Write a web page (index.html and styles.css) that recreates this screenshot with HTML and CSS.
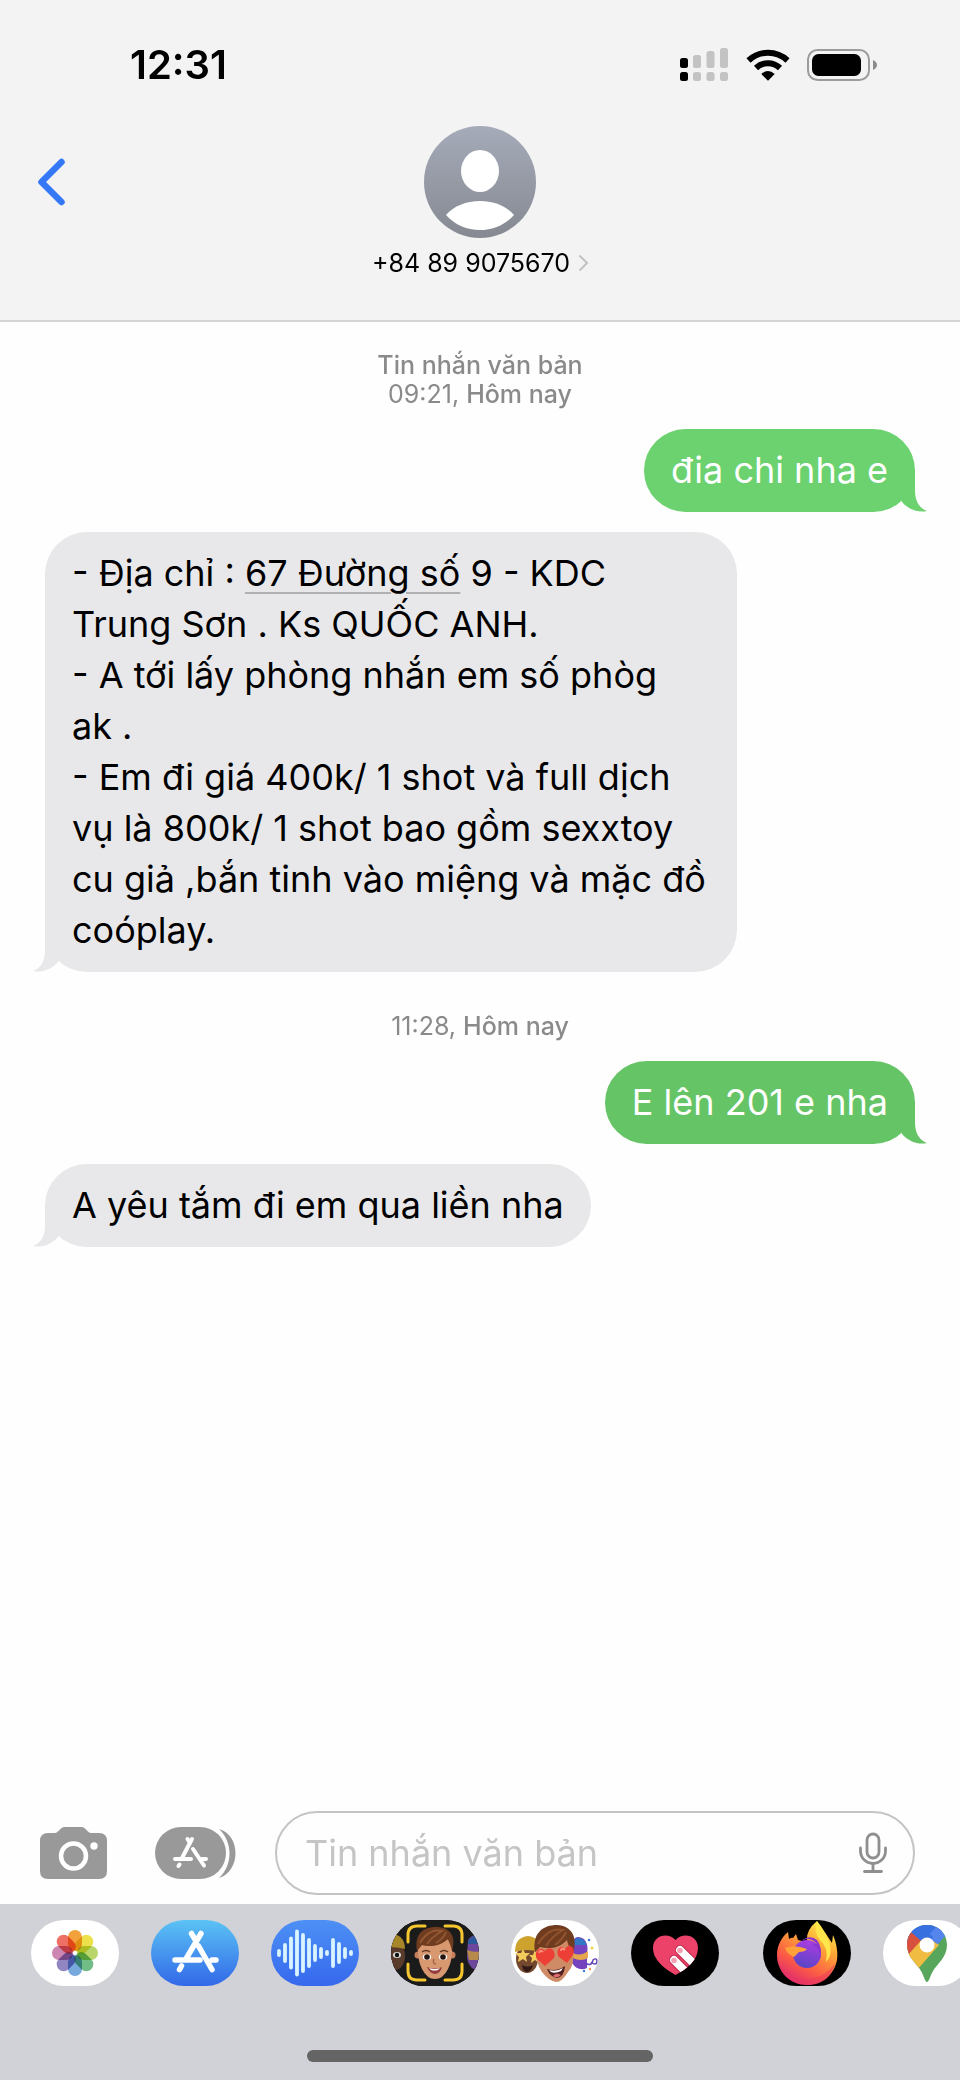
FILE: index.html
```html
<!DOCTYPE html>
<html lang="vi">
<head>
    <meta charset="UTF-8">
    <meta name="viewport" content="width=device-width, initial-scale=1.0">
    <title>Tin nhắn</title>
    <link rel="stylesheet" href="styles.css">
</head>
<body>
    <header class="header">
        <!-- Status bar -->
        <div class="status-bar">
            <time class="clock">12:31</time>
            <div class="status-icons">
                <svg width="50" height="34" viewBox="0 0 50 34" aria-hidden="true">
                    <g fill="#000">
                        <rect x="1" y="10" width="8" height="10" rx="2.5"/>
                        <rect x="1" y="24" width="8" height="9" rx="2.5"/>
                    </g>
                    <g fill="#c3c3c3">
                        <rect x="14" y="7" width="8" height="13" rx="2.5"/>
                        <rect x="27.500" y="3" width="8" height="17" rx="2.5"/>
                        <rect x="41" y="0" width="8" height="20" rx="2.5"/>
                        <rect x="14" y="24" width="8" height="9" rx="2.5"/>
                        <rect x="27.500" y="24" width="8" height="9" rx="2.5"/>
                        <rect x="41" y="24" width="8" height="9" rx="2.5"/>
                    </g>
                </svg>
                <svg width="44" height="32" viewBox="0 0 44 32" aria-hidden="true">
                    <g fill="none" stroke="#000" stroke-width="6">
                        <path d="M2.500 11.500A28.500 28.500 0 0 1 41.500 11.500"/>
                        <path d="M10 19A17.500 17.500 0 0 1 34 19"/>
                    </g>
                    <path d="M15.300 25Q22 19 28.700 25L22 31.800Z"/>
                </svg>
                <svg width="70" height="32" viewBox="0 0 70 32" aria-hidden="true">
                    <rect x="1" y="1" width="61" height="30" rx="9.500" fill="none" stroke="#9c9c9c" stroke-width="2"/>
                    <rect x="5" y="5" width="49" height="22" rx="6.500"/>
                    <path d="M66 11Q70 13 70 16T66 21Z" fill="#8c8c8c"/>
                </svg>
            </div>
        </div>

        <!-- Contact -->
        <nav class="nav">
            <button class="back" type="button" aria-label="Quay lại">
                <svg width="28" height="48" viewBox="0 0 28 48" aria-hidden="true">
                    <path d="M24.500 4L4.500 24L24.500 44" fill="none" stroke="#3478f6" stroke-width="6.500" stroke-linecap="round" stroke-linejoin="round"/>
                </svg>
            </button>
            <button class="contact" type="button">
                <svg class="avatar" viewBox="0 0 112 112" aria-hidden="true">
                    <defs>
                        <linearGradient id="avatarFill" x1="0" y1="0" x2="0" y2="1">
                            <stop offset="0" stop-color="#a5abb9"/>
                            <stop offset="1" stop-color="#858991"/>
                        </linearGradient>
                    </defs>
                    <circle cx="56" cy="56" r="56" fill="url(#avatarFill)"/>
                    <ellipse cx="56" cy="45" rx="19" ry="21" fill="#fff"/>
                    <path d="M22 89C30 80 42 75 56 75S82 80 90 89C81 99 69 104 56 104S31 99 22 89Z" fill="#fff"/>
                </svg>
                <span class="contact-name">
                    +84 89 9075670
                    <svg width="10" height="18" viewBox="0 0 10 18" aria-hidden="true">
                        <path d="M1.500 1.500L9 9L1.500 16.500" fill="none" stroke="#c2c2c4" stroke-width="2"/>
                    </svg>
                </span>
            </button>
        </nav>
    </header>

    <!-- Conversation -->
    <main class="chat">
        <p class="stamp"><b>Tin nhắn văn bản</b><br>09:21, <b>Hôm nay</b></p>
        <div class="bubble sent light">đia chi nha e
            <svg class="tail" viewBox="0 0 28 42" aria-hidden="true"><path d="M16 0V20C16 31 20 38 28 41C20 43 10 40 3 32L0 20V0Z"/></svg>
        </div>
        <div class="bubble received long">- Địa chỉ : <a href="#">67 Đường số</a> 9 - KDC<br>Trung Sơn . Ks QUỐC ANH.<br>- A tới lấy phòng nhắn em số phòg<br>ak .<br>- Em đi giá 400k/ 1 shot và full dịch<br>vụ là 800k/ 1 shot bao gồm sexxtoy<br>cu giả ,bắn tinh vào miệng và mặc đồ<br>coóplay.
            <svg class="tail" viewBox="0 0 28 42" aria-hidden="true"><path d="M16 0V20C16 31 20 38 28 41C20 43 10 40 3 32L0 20V0Z"/></svg>
        </div>
        <p class="stamp">11:28, <b>Hôm nay</b></p>
        <div class="bubble sent">E lên 201 e nha
            <svg class="tail" viewBox="0 0 28 42" aria-hidden="true"><path d="M16 0V20C16 31 20 38 28 41C20 43 10 40 3 32L0 20V0Z"/></svg>
        </div>
        <div class="bubble received">A yêu tắm đi em qua liền nha
            <svg class="tail" viewBox="0 0 28 42" aria-hidden="true"><path d="M16 0V20C16 31 20 38 28 41C20 43 10 40 3 32L0 20V0Z"/></svg>
        </div>
    </main>

    <!-- Compose bar -->
    <form class="compose">
        <button class="tool" type="button" aria-label="Máy ảnh">
            <svg width="68" height="52" viewBox="0 0 68 52" aria-hidden="true">
                <path d="M8 6H15C18 6 20 1 24 0H42C46 1 48 6 51 6H59Q67 6 67 14V44Q67 52 59 52H8Q0 52 0 44V14Q0 6 8 6Z" fill="#999"/>
                <circle cx="33.500" cy="29" r="12.500" fill="none" stroke="#fff" stroke-width="4.500"/>
                <circle cx="54" cy="19" r="3.700" fill="#fff"/>
            </svg>
        </button>
        <button class="tool" type="button" aria-label="Ứng dụng">
            <svg width="82" height="52" viewBox="0 0 82 52" aria-hidden="true">
                <rect width="71" height="52" rx="26" fill="#999"/>
                <path d="M64 2C86 8 86 44 64 51C78 38 78 15 64 2Z" fill="#999"/>
                <g fill="none" stroke="#fff" stroke-width="4" stroke-linecap="round">
                    <path d="M37 12L27 31M32.500 12L35 16M38 22L49 38.500M20 32H36M47 32H51M24.500 37.500L23.500 39"/>
                </g>
            </svg>
        </button>
        <div class="field">
            <input type="text" placeholder="Tin nhắn văn bản" aria-label="Tin nhắn văn bản">
            <button class="mic" type="button" aria-label="Đọc chính tả">
                <svg width="28" height="42" viewBox="0 0 28 42" aria-hidden="true">
                    <g fill="none" stroke="#8f8f8f" stroke-width="2.800" stroke-linecap="round">
                        <rect x="8" y="2" width="12" height="24" rx="6"/>
                        <path d="M1.500 16V19A12.500 12.500 0 0 0 26.500 19V16M14 32V39.500M5.500 39.500H22.500"/>
                    </g>
                </svg>
            </button>
        </div>
    </form>

    <!-- App strip -->
    <footer class="dock">
        <div class="apps">
            <button class="app white" type="button" aria-label="Ảnh">
                <svg viewBox="0 0 88 66" aria-hidden="true">
                    <g class="petals" transform="translate(44 33)">
                        <rect x="-7" y="-23" width="14" height="21" rx="7" fill="#f2a13c"/>
                        <rect x="-7" y="-23" width="14" height="21" rx="7" fill="#ece14b" transform="rotate(45)"/>
                        <rect x="-7" y="-23" width="14" height="21" rx="7" fill="#b9d66b" transform="rotate(90)"/>
                        <rect x="-7" y="-23" width="14" height="21" rx="7" fill="#72bd87" transform="rotate(135)"/>
                        <rect x="-7" y="-23" width="14" height="21" rx="7" fill="#78a9dc" transform="rotate(180)"/>
                        <rect x="-7" y="-23" width="14" height="21" rx="7" fill="#9185c2" transform="rotate(225)"/>
                        <rect x="-7" y="-23" width="14" height="21" rx="7" fill="#cb86b1" transform="rotate(270)"/>
                        <rect x="-7" y="-23" width="14" height="21" rx="7" fill="#ee7065" transform="rotate(315)"/>
                    </g>
                </svg>
            </button>
            <button class="app store" type="button" aria-label="App Store">
                <svg viewBox="0 0 88 66" aria-hidden="true">
                    <path d="M50 13.500L35.500 38M40.500 13.500L45 21M47.500 26L61 49.500M24 40H49M61 40H65M30.500 46L28.500 49.500" fill="none" stroke="#fff" stroke-width="5.500" stroke-linecap="round"/>
                </svg>
            </button>
            <button class="app audio" type="button" aria-label="Âm thanh">
                <svg viewBox="0 0 88 66" aria-hidden="true">
                    <path d="M8 31V35M14 25V41M20 18.500V47.500M26 11.500V54.500M32 15V51M38 20V46M44 26V40M50 29V37M56 32V34M62 20V46M68 24V42M74 29V37M80 32V34" fill="none" stroke="#d9f4ff" stroke-width="3.800" stroke-linecap="round"/>
                </svg>
            </button>
            <button class="app black" type="button" aria-label="Memoji">
                <svg viewBox="0 0 88 66" aria-hidden="true">
                    <rect width="88" height="66" fill="#1b1b1c"/>
                    <ellipse cx="4" cy="36" rx="10" ry="14" fill="#593b2b"/>
                    <path d="M-6 28Q-2 14 6 15Q14 18 14 29Q4 26 -6 28Z" fill="#a88729"/>
                    <ellipse cx="6" cy="35" rx="4" ry="3" fill="#ddd"/>
                    <circle cx="6" cy="35" r="2.200" fill="#111"/>
                    <path d="M77 20Q82 13 90 16V52Q78 50 76 38Z" fill="#6c479c"/>
                    <path d="M77 21Q82 14 90 17V24H77Z" fill="#2b579b"/>
                    <path d="M76 30Q82 33 90 31V40H78Z" fill="#b78a4c"/>
                    <path d="M17 22V15Q17 6 26 6H34M54 6H62Q71 6 71 15V22M17 44V51Q17 60 26 60H34M54 60H62Q71 60 71 51V44" fill="none" stroke="#f6c62f" stroke-width="3" stroke-linecap="round"/>
                    <circle cx="27" cy="35" r="3.500" fill="#c67d5b"/>
                    <circle cx="61" cy="35" r="3.500" fill="#c67d5b"/>
                    <path d="M27 25Q30 16 44 16T61 25Q62 39 57 49Q52 59 44 59T31 49Q26 39 27 25Z" fill="#d89870"/>
                    <path d="M26 31C23 13 33 7 45 7C58 7 66 15 61 31C60 26 58 22 57 19C49 27 37 27 31 25Z" fill="#6f3c20"/>
                    <path d="M29 23C34 14 42 9 51 11C46 14 40 18 36 24M45 23Q53 18 55 12" fill="none" stroke="#925733" stroke-width="2"/>
                    <path d="M31 32Q35 29 39 32M49 32Q53 29 57 32" fill="none" stroke="#613820" stroke-width="1.500"/>
                    <ellipse cx="36" cy="37" rx="4.200" ry="3" fill="#fff"/>
                    <ellipse cx="52" cy="37" rx="4.200" ry="3" fill="#fff"/>
                    <circle cx="36" cy="37" r="2.800" fill="#25140d"/>
                    <circle cx="52" cy="37" r="2.800" fill="#25140d"/>
                    <path d="M43 39Q41 44 45 44" fill="none" stroke="#ad6548" stroke-width="1.500"/>
                    <path d="M36 47Q44 50 51 47Q49 54 44 54T36 47Z" fill="#943c3d"/>
                    <path d="M38 48Q44 50 49 48L47 50Q43 51 40 50Z" fill="#fff"/>
                </svg>
            </button>
            <button class="app white" type="button" aria-label="Nhãn dán Memoji">
                <svg viewBox="0 0 88 66" aria-hidden="true">
                    <ellipse cx="16" cy="39" rx="11" ry="14" fill="#74482f"/>
                    <path d="M4 32Q4 17 17 16Q30 17 29 32Q16 28 4 32Z" fill="#cda32d"/>
                    <path d="M12 29L14 33L19 33L15 37L16 42L12 39L7 42L8 37L4 33H10ZM24 30L26 35H30L27 39L28 43L24 40L20 43L21 38L18 35H22Z" fill="#f2cb5b"/>
                    <path d="M11 45Q17 48 22 45Q20 52 16 52T11 45Z" fill="#321916"/>
                    <path d="M62 21Q65 14 73 19Q78 25 76 32V48Q67 52 61 43Z" fill="#7543bd"/>
                    <path d="M62 22Q66 15 73 20L76 25H62Z" fill="#3277c4"/>
                    <path d="M62 33Q69 37 77 31V38Q70 42 62 38Z" fill="#e5a64d"/>
                    <path d="M74 43Q81 47 82 40Q86 37 86 42Q85 46 80 42" fill="none" stroke="#6745b8" stroke-width="1.500"/>
                    <circle cx="78" cy="20" r="1.300" fill="#3d78df"/><circle cx="81" cy="28" r="1.500" fill="#f1d33e"/>
                    <circle cx="73" cy="51" r="1.200" fill="#3d78df"/><circle cx="79" cy="49" r="1.200" fill="#ef9453"/>
                    <path d="M25 27Q29 16 44 15Q62 17 62 30Q64 45 57 52Q51 62 45 62Q38 61 31 52Q24 42 25 27Z" fill="#cf8b66"/>
                    <path d="M24 32C21 13 32 5 46 5C61 6 67 17 62 34C60 29 57 26 56 20C48 29 37 29 29 27Z" fill="#6f3c20"/>
                    <path d="M27 24C34 13 42 8 52 10C45 14 39 19 35 26M44 25Q52 19 55 12" fill="none" stroke="#92532e" stroke-width="2"/>
                    <path d="M34 46L26 39C22 32 29 25 34 31C38 25 46 30 43 38ZM56 43L48 37C44 31 49 23 54 29C58 22 65 27 62 35Z" fill="#ed3f35"/>
                    <path d="M28 33Q29 29 32 32M50 31Q50 27 54 30" fill="none" stroke="#ff8d78" stroke-width="2"/>
                    <path d="M36 49Q46 52 54 46Q53 57 46 58Q39 57 36 49Z" fill="#521d1d"/>
                    <path d="M38 50Q46 52 52 48L50 51Q44 54 40 52Z" fill="#fff"/>
                    <path d="M42 56Q45 52 50 55Q46 59 42 56Z" fill="#db6d73"/>
                </svg>
            </button>
            <button class="app black" type="button" aria-label="Digital Touch">
                <svg viewBox="0 0 88 66" aria-hidden="true">
                    <defs>
                        <clipPath id="heartClip"><path d="M44.500 55C34 49 22 40 22 28C22 15 37 12 44.500 20C52 12 67 15 67 28C67 40 56 49 44.500 55Z"/></clipPath>
                    </defs>
                    <g clip-path="url(#heartClip)">
                        <rect width="88" height="66" fill="#ec4269"/>
                        <path d="M43 40L60 57M49 30L67 48" stroke="#bd294c" stroke-width="10" stroke-linecap="round"/>
                        <path d="M43 40L60 57M49 30L67 48" stroke="#fff" stroke-width="8" stroke-linecap="round"/>
                        <circle cx="43" cy="40.500" r="2.800" fill="#f5a1b5"/>
                        <circle cx="49" cy="30.500" r="2.800" fill="#f5a1b5"/>
                    </g>
                </svg>
            </button>
            <span class="divider"></span>
            <button class="app black" type="button" aria-label="Firefox">
                <svg viewBox="0 0 88 66" aria-hidden="true">
                    <defs>
                        <linearGradient id="foxBody" x1=".8" y1="0" x2=".25" y2="1">
                            <stop offset="0" stop-color="#fff44f"/>
                            <stop offset=".35" stop-color="#ffa436"/>
                            <stop offset=".7" stop-color="#fb5a46"/>
                            <stop offset="1" stop-color="#dc2377"/>
                        </linearGradient>
                        <linearGradient id="foxGlobe" x1=".7" y1="0" x2=".4" y2="1">
                            <stop offset="0" stop-color="#ad3ce2"/>
                            <stop offset="1" stop-color="#5845c5"/>
                        </linearGradient>
                    </defs>
                    <path d="M54 1C56 6 61 10 65 17L69 23L70 15C74 24 75 34 74 40C71 55 59 65 44 65C27 65 14 52 14 35C14 26 18 18 25 12L26 19Q29 17 30 18L33 14L35 20Q41 21 44 25L53 29L44 20Q43 10 54 1Z" fill="url(#foxBody)"/>
                    <path d="M54 1Q50 12 57 20Q66 28 63 42Q71 34 65 19Q60 8 54 1Z" fill="#ffe64a"/>
                    <path d="M15 40Q20 59 43 59Q61 59 72 43Q67 65 44 65Q20 63 15 40Z" fill="#e9365e" opacity=".5"/>
                    <circle cx="44" cy="34" r="14" fill="url(#foxGlobe)"/>
                    <path d="M38 21Q47 16 54 24Q50 23 49 24Q58 29 57 39Q60 28 54 20Q47 14 38 21Z" fill="#8a35d0"/>
                    <path d="M22 28Q31 24 44 29Q42 32 36 32L31 37Q24 34 22 28Z" fill="#ffa13a"/>
                </svg>
            </button>
            <button class="app white" type="button" aria-label="Google Maps">
                <svg viewBox="0 0 88 66" aria-hidden="true">
                    <defs>
                        <clipPath id="pinClip"><path d="M44 62C42 62 41 56 38 51C34 44 24 37 24 25C24 13 33 5 44 5S64 13 64 25C64 37 54 44 50 51C47 56 46 62 44 62Z"/></clipPath>
                    </defs>
                    <g clip-path="url(#pinClip)">
                        <rect width="88" height="66" fill="#58a55c"/>
                        <path d="M24 0H54L62 9L36 39L22 20Z" fill="#3870df"/>
                        <path d="M44 17L59 0L72 15L61 17L50 30Z" fill="#5484ec"/>
                        <path d="M15 1L44 25L22 43Z" fill="#d85040"/>
                        <path d="M24 36L42 16L56 25L34 50Z" fill="#f1bc42"/>
                        <path d="M28 12L43 25L50 17L36 3Z" fill="#3870df"/>
                    </g>
                    <circle cx="44" cy="25" r="7.500" fill="#fff"/>
                </svg>
            </button>
        </div>
        <div class="home-indicator"></div>
    </footer>
</body>
</html>
```
FILE: styles.css
```css
:root {
    --text-color: #000000;
    --muted: #8a8a8a;
    --header-bg: #f3f3f3;
    --received: #e8e8ea;
    --sent: #65c466;
    --sent-light: #6bd26f;
    --dock-bg: #d1d2d7;
}

* {
    margin: 0;
    padding: 0;
    box-sizing: border-box;
}

body {
    font-family: Inter, "Noto Sans", sans-serif;
    background-color: #fefefe;
    color: var(--text-color);
    min-height: 100vh;
    display: flex;
    flex-direction: column;
    overflow-x: hidden;
}

button {
    border: none;
    background: none;
    font: inherit;
    color: inherit;
    cursor: pointer;
}

svg {
    display: block;
    flex-shrink: 0;
}

.header {
    background-color: var(--header-bg);
    border-bottom: 2px solid #d3d3d3;
    padding: 41px 0 42px;
}

.status-bar {
    display: flex;
    justify-content: space-between;
    align-items: center;
    padding: 0 83px 0 130px;
}

.clock {
    font-size: 40px;
    line-height: 48px;
    font-weight: 600;
}

.status-icons {
    display: flex;
    align-items: center;
    gap: 17px;
}

.nav {
    display: grid;
    grid-template-columns: 1fr auto 1fr;
    align-items: start;
    margin-top: 37px;
    padding: 0 37px;
}

.back {
    height: 112px;
    justify-self: start;
}

.contact {
    display: flex;
    flex-direction: column;
    align-items: center;
    gap: 10px;
}

.avatar {
    width: 112px;
    height: 112px;
}

.contact-name {
    display: flex;
    align-items: center;
    gap: 8px;
    font-size: 25px;
    line-height: 30px;
}

.chat {
    flex: 1;
    display: flex;
    flex-direction: column;
    gap: 20px;
    padding: 29px 45px;
}

.stamp {
    text-align: center;
    font-size: 25px;
    line-height: 29px;
    color: var(--muted);
}

.stamp b {
    font-weight: 500;
}

.bubble + .stamp {
    margin-top: 20px;
}

.bubble {
    position: relative;
    max-width: 692px;
    padding: 16px 27px;
    border-radius: 42px;
    font-size: 36px;
    line-height: 51px;
    white-space: nowrap;
}

.bubble a {
    color: inherit;
    text-decoration: underline #b0b0b2 2px;
    text-underline-offset: 6px;
}

.sent {
    align-self: flex-end;
    background-color: var(--sent);
    color: #ffffff;
    fill: var(--sent);
}

.sent.light {
    background-color: var(--sent-light);
    fill: var(--sent-light);
}

.received {
    align-self: flex-start;
    background-color: var(--received);
    fill: var(--received);
}

.long {
    width: 100%;
}

.tail {
    position: absolute;
    z-index: -1;
    bottom: 0;
    right: -12px;
    width: 28px;
    height: 42px;
}

.received .tail {
    right: auto;
    left: -12px;
    transform: scaleX(-1);
}

.compose {
    display: flex;
    align-items: center;
    padding: 0 45px 9px 40px;
}

.tool {
    margin-right: 47px;
}

.tool + .tool {
    margin-right: 38px;
}

.field {
    flex: 1;
    min-width: 0;
    display: flex;
    align-items: center;
    height: 84px;
    padding: 0 26px 0 28px;
    border: 2px solid #c4c4c4;
    border-radius: 42px;
}

.field input {
    flex: 1;
    min-width: 0;
    border: none;
    outline: none;
    background: none;
    font: inherit;
    font-size: 36px;
    line-height: 51px;
}

.field input::placeholder {
    color: #c5c5c5;
    opacity: 1;
}

.dock {
    display: flex;
    flex-direction: column;
    align-items: center;
    background-color: var(--dock-bg);
    padding: 16px 0 18px;
}

.apps {
    width: 100%;
    display: flex;
    align-items: center;
    gap: 32px;
    padding-left: 31px;
    overflow: hidden;
}

.app {
    flex: none;
    width: 88px;
    height: 66px;
    border-radius: 33px;
    overflow: hidden;
}

.app svg {
    width: 88px;
    height: 66px;
}

.white {
    background-color: #ffffff;
}

.black {
    background-color: #000000;
}

.store {
    background: linear-gradient(#5bc3f4, #3268e8);
}

.audio {
    background: linear-gradient(#4d90f5, #3668ed);
}

.petals {
    isolation: isolate;
}

.petals rect {
    mix-blend-mode: multiply;
}

.divider {
    width: 2px;
    height: 56px;
    margin: 0 -10px;
    background-color: #b5b5ba;
}

.home-indicator {
    width: 36%;
    height: 12px;
    margin-top: 64px;
    border-radius: 6px;
    background-color: #656565;
}
```
